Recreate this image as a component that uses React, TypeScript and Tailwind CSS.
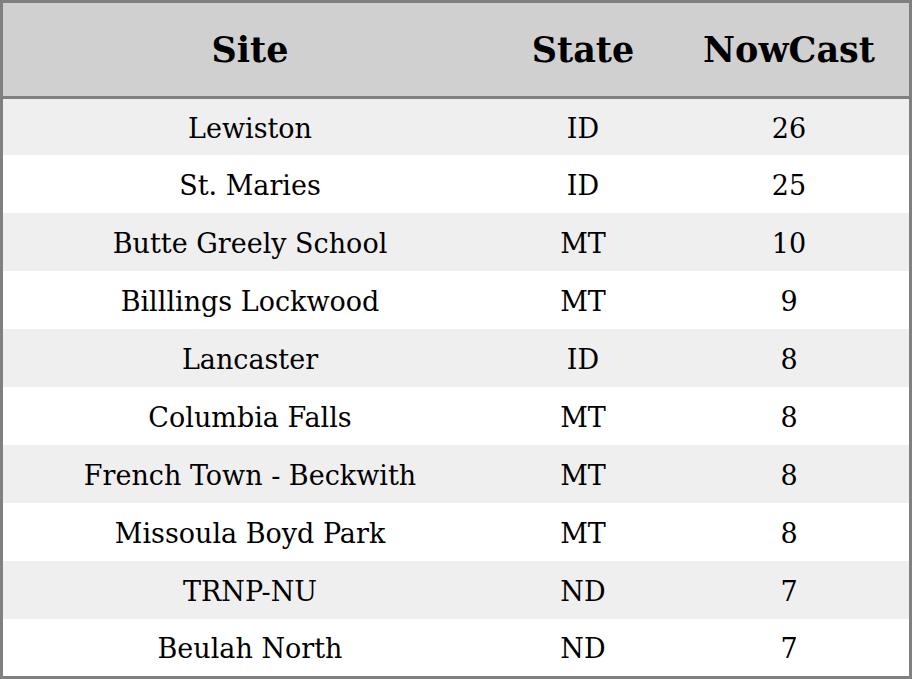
import React from "react";

const rows: [string, string, string][] = [
  ["Lewiston", "ID", "26"],
  ["St. Maries", "ID", "25"],
  ["Butte Greely School", "MT", "10"],
  ["Billlings Lockwood", "MT", "9"],
  ["Lancaster", "ID", "8"],
  ["Columbia Falls", "MT", "8"],
  ["French Town - Beckwith", "MT", "8"],
  ["Missoula Boyd Park", "MT", "8"],
  ["TRNP-NU", "ND", "7"],
  ["Beulah North", "ND", "7"],
];

export default function App() {
  return (
    <div
      className="w-[912px] h-[679px] border-[3px] border-[#808080] bg-white text-black flex flex-col"
      style={{ fontFamily: '"DejaVu Serif", "Liberation Serif", serif' }}
    >
      <div className="h-[93px] bg-[#d0d0d0] border-b-[3px] border-[#808080] box-content flex items-center text-[35px] leading-none font-bold">
        <div className="w-[494px] text-center">Site</div>
        <div className="w-[172px] text-center">State</div>
        <div className="flex-1 text-center">NowCast</div>
      </div>
      {rows.map((r, i) => (
        <div
          key={i}
          className={`flex items-center text-[27px] leading-none pt-[2px] ${i === 0 ? "h-[56px]" : i === rows.length - 1 ? "h-[57px]" : "h-[58px]"} ${i % 2 === 0 ? "bg-[#efefef]" : "bg-white"}`}
        >
          <div className="w-[494px] text-center">{r[0]}</div>
          <div className="w-[172px] text-center">{r[1]}</div>
          <div className="flex-1 text-center">{r[2]}</div>
        </div>
      ))}
    </div>
  );
}
